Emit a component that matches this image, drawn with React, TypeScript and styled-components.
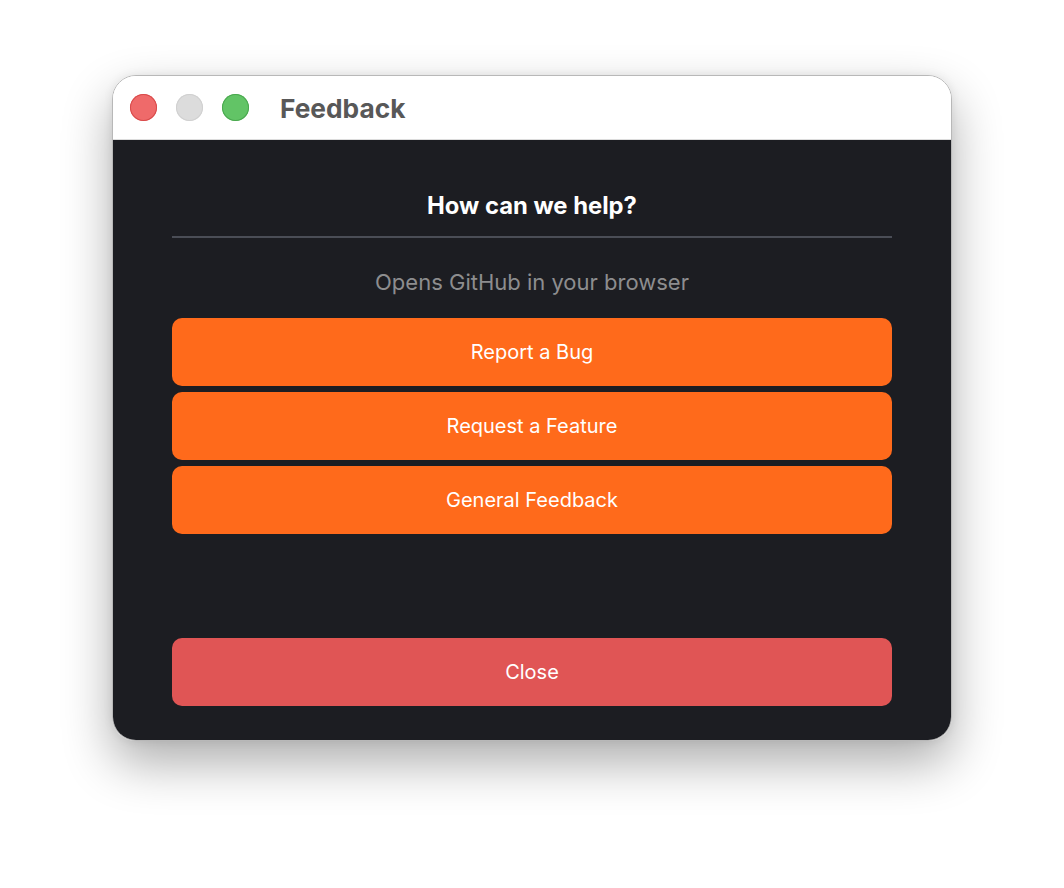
import React from 'react'
import styled, { createGlobalStyle } from 'styled-components'

const GlobalStyle = createGlobalStyle`
  html, body {
    margin: 0;
    padding: 0;
    background: #ffffff;
    font-family: Inter, "Noto Sans", sans-serif;
  }
`

const Page = styled.div`
  width: 1064px;
  height: 888px;
  display: flex;
  padding: 75px 0 0 112px;
  box-sizing: border-box;
`

const Window = styled.div`
  width: 840px;
  height: 666px;
  border-radius: 24px;
  overflow: hidden;
  display: flex;
  flex-direction: column;
  border: 1px solid #b8b8b8;
  box-sizing: border-box;
  box-shadow: 0 22px 50px rgba(0, 0, 0, 0.32), 0 0 10px rgba(0, 0, 0, 0.08);
`

const TitleBar = styled.div`
  height: 63px;
  flex-shrink: 0;
  background: #ffffff;
  border-bottom: 1px solid #dcdcdc;
  display: flex;
  align-items: center;
  padding-left: 17px;
  gap: 18px;
`

const Light = styled.span<{ $fill: string; $edge: string }>`
  width: 27px;
  height: 27px;
  border-radius: 50%;
  background: ${p => p.$fill};
  box-shadow: inset 0 0 0 1px ${p => p.$edge};
`

const Lights = styled.div`
  display: flex;
  gap: 19px;
`

const Title = styled.h1`
  margin: 2px 0 0 13px;
  font-size: 26.3px;
  font-weight: 700;
  color: #585858;
`

const Body = styled.main`
  flex: 1;
  background: #1c1d22;
  display: flex;
  flex-direction: column;
  padding: 53px 59px 34px 59px;
`

const Heading = styled.h2`
  margin: 0;
  font-size: 23.8px;
  line-height: 26px;
  font-weight: 700;
  color: #ffffff;
  text-align: center;
`

const Divider = styled.hr`
  margin: 17px 0 0 0;
  border: none;
  height: 2px;
  background: #4a4d56;
`

const Hint = styled.p`
  margin: 32px 0 0 0;
  font-size: 22px;
  line-height: 24px;
  color: #8d8d8f;
  text-align: center;
`

const Actions = styled.div`
  margin-top: 24px;
  display: flex;
  flex-direction: column;
  gap: 6px;
`

const Button = styled.button<{ $tone: 'orange' | 'red' }>`
  height: 68px;
  border: none;
  border-radius: 10px;
  background: ${p => (p.$tone === 'orange' ? '#ff6a1b' : '#e05555')};
  color: #ffffff;
  font-family: Inter, "Noto Sans", sans-serif;
  font-size: 20px;
  cursor: pointer;
`

const CloseButton = styled(Button)`
  margin-top: auto;
`

export default function App() {
  return (
    <>
      <GlobalStyle />
      <Page>
        <Window>
          <TitleBar>
            <Lights>
              <Light $fill="#ef6a6a" $edge="#d84a4a" />
              <Light $fill="#dcdcdc" $edge="#d0d0d0" />
              <Light $fill="#62c466" $edge="#4aa84f" />
            </Lights>
            <Title>Feedback</Title>
          </TitleBar>
          <Body>
            <Heading>How can we help?</Heading>
            <Divider />
            <Hint>Opens GitHub in your browser</Hint>
            <Actions>
              <Button $tone="orange">Report a Bug</Button>
              <Button $tone="orange">Request a Feature</Button>
              <Button $tone="orange">General Feedback</Button>
            </Actions>
            <CloseButton $tone="red">Close</CloseButton>
          </Body>
        </Window>
      </Page>
    </>
  )
}
